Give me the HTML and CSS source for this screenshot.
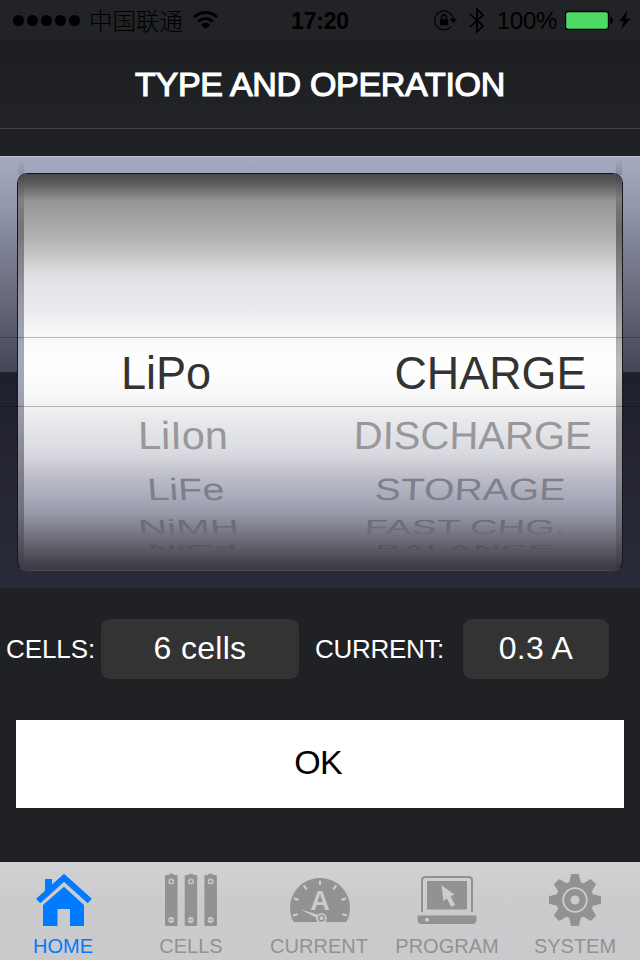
FILE: index.html
```
<!DOCTYPE html>
<html lang="en">
<head>
    <meta charset="UTF-8">
    <meta name="viewport" content="width=device-width, initial-scale=1.0">
    <title>Type and Operation</title>
    <link rel="stylesheet" href="styles.css">
</head>
<body>

    <!-- Status bar -->
    <div class="status-bar">
        <div class="status-left">
            <div class="signal"><i></i><i></i><i></i><i></i><i></i></div>
            <span class="carrier" lang="zh-CN">中国联通</span>
            <svg class="wifi" width="26" height="20" viewBox="194 10 26 20">
                <path d="M195.2 17.2a16.2 16.2 0 0 1 22.8 0M199.2 21.6a10.5 10.5 0 0 1 14.8 0" fill="none" stroke="#000" stroke-width="2.8"/>
                <path d="M206.6 29l-4.6-4.4a6.6 6.6 0 0 1 9.2 0z"/>
            </svg>
        </div>
        <span class="time">17:20</span>
        <div class="status-right">
            <svg class="lock" width="26" height="24" viewBox="431 8 26 24">
                <path d="M450.3 26.3a9.4 9.4 0 1 1 2-7.3" fill="none" stroke="#000" stroke-width="1.2"/>
                <path d="M448.6 18.8h7.6l-3.8 4.4zM439 19.2h8.2v6H439z"/>
                <path d="M440.7 19.5v-2.3a2.4 2.4 0 0 1 4.8 0v2.3" fill="none" stroke="#000" stroke-width="1.4"/>
            </svg>
            <svg class="bluetooth" width="16" height="28" viewBox="468 7 16 28">
                <path d="M469 14.2l13 11.6-6 6V9.2l6 6-13 11.6" fill="none" stroke="#000" stroke-width="1.8"/>
            </svg>
            <span class="percent">100%</span>
            <svg class="battery" width="66" height="20" viewBox="565 10 66 20">
                <rect x="565.5" y="11.5" width="43" height="18" rx="2.5" fill="#4cd964" stroke="#000" stroke-width="1.4"/>
                <path d="M610 17q3 .6 3 3.5t-3 3.5zM627.3 11l-8.3 10.3h4.5L621.3 29.5l8.9-10.8h-4.7z"/>
            </svg>
        </div>
    </div>

    <header class="nav-bar">
        <h1>TYPE AND OPERATION</h1>
    </header>

    <!-- Wheel picker -->
    <div class="picker">
        <div class="wheel">
            <div class="edge edge-left"></div>
            <div class="drum">
                <ul class="column types">
                    <li class="row1"><span>LiPo</span></li>
                    <li class="row2"><span>LiIon</span></li>
                    <li class="row3"><span>LiFe</span></li>
                    <li class="row4"><span>NiMH</span></li>
                    <li class="row5"><span>NiCd</span></li>
                </ul>
                <ul class="column operations">
                    <li class="row1"><span>CHARGE</span></li>
                    <li class="row2"><span>DISCHARGE</span></li>
                    <li class="row3"><span>STORAGE</span></li>
                    <li class="row4"><span>FAST CHG.</span></li>
                    <li class="row5"><span>BALANCE</span></li>
                </ul>
            </div>
            <div class="edge edge-right"></div>
        </div>
        <div class="selection"></div>
    </div>

    <div class="settings">
        <span class="label">CELLS:</span>
        <button class="value cells">6 cells</button>
        <span class="label current-label">CURRENT:</span>
        <button class="value current">0.3 A</button>
    </div>

    <button class="ok">OK</button>

    <!-- Tab bar -->
    <nav class="tab-bar">
        <a class="tab active">
            <svg width="64" height="60" viewBox="31 870 64 60">
                <path d="M38.2 901L64 877.8 89.8 901" fill="none" stroke="currentColor" stroke-width="6.2"/>
                <path d="M45 879h7v6l-7 6.5zM64 886.8l20 18.2v21H70v-17H57.5v17H43v-21z"/>
            </svg>
            <span>HOME</span>
        </a>
        <a class="tab">
            <svg width="64" height="60" viewBox="159 870 64 60">
                <defs>
                    <g id="cell">
                        <path d="M4 .5V-.8h4.500V.5h3q1 0 1 1v49q0 1-1 1H1q-1 0-1-1v-49q0-1 1-1z"/>
                        <circle cx="6.2" cy="7" r="2.9" fill="#ccccce"/>
                        <circle cx="6.2" cy="45.5" r="2.9" fill="#ccccce"/>
                        <path d="M4.2 7h4M6.2 5v4M4.2 45.5h4" stroke="#929292" stroke-width="1.2"/>
                    </g>
                </defs>
                <use href="#cell" x="165" y="874.5"/>
                <use href="#cell" x="184.7" y="874.5"/>
                <use href="#cell" x="204.4" y="874.5"/>
            </svg>
            <span>CELLS</span>
        </a>
        <a class="tab">
            <svg width="64" height="60" viewBox="287 870 64 60">
                <path d="M293.5 922a30 30 0 1 1 53 0z"/>
                <path d="M320 880.5v4.5M303.8 885.5l3 4M336.2 885.5l-3 4M294 898.2l4.5 1.7M346 898.2l-4.5 1.7M293 915.5l4.7-1.2M347 915.5l-4.7-1.2" stroke="#ccccce" stroke-width="2.2"/>
                <path d="M300 909.3l18.5 5.700-1.500 3z" fill="#ccccce"/>
                <path d="M317.5 922a5.300 5.300 0 1 1 8 0z" fill="#ccccce"/>
                <circle cx="321.5" cy="918.3" r="2.7" fill="#ccccce" stroke="#929292" stroke-width="1.5"/>
                <text class="gauge-letter" x="320" y="909.5">A</text>
            </svg>
            <span>CURRENT</span>
        </a>
        <a class="tab">
            <svg width="64" height="60" viewBox="415 870 64 60">
                <path d="M422 912v-31.5q0-3.5 3.5-3.5h43q3.5 0 3.5 3.5V912" fill="none" stroke="currentColor" stroke-width="2"/>
                <path d="M427 881h40v28.5h-40zM417.5 915.500h59v4q0 4.500-4.500 4.500h-50q-4.500 0-4.500-4.500z"/>
                <path d="M441.5 885.3l1.900 15.700 3.400-2.600 4.600 8.600 3.700-2-4.500-8.600 3.900-1.900z" fill="#ccccce"/>
                <circle cx="427" cy="919.7" r="2" fill="#ccccce"/>
            </svg>
            <span>PROGRAM</span>
        </a>
        <a class="tab">
            <svg width="64" height="60" viewBox="543 870 64 60">
                <defs>
                    <path id="teeth" d="M569 883l2.200-9h7.600l2.200 9v34l-2.200 9h-7.600l-2.200-9z"/>
                </defs>
                <use href="#teeth"/>
                <use href="#teeth" transform="rotate(45 575 900)"/>
                <use href="#teeth" transform="rotate(90 575 900)"/>
                <use href="#teeth" transform="rotate(135 575 900)"/>
                <circle cx="575" cy="900" r="18.8"/>
                <circle cx="575" cy="900" r="11.8" fill="none" stroke="#ccccce" stroke-width="1.8"/>
                <circle cx="575" cy="900" r="4.5" fill="#ccccce"/>
            </svg>
            <span>SYSTEM</span>
        </a>
    </nav>

</body>
</html>
```
FILE: styles.css
```
* {
    box-sizing: border-box;
}

body {
    width: 640px;
    height: 960px;
    margin: 0;
    overflow: hidden;
    display: flex;
    flex-direction: column;
    background: #202124;
    color: #fff;
    font-family: 'Liberation Sans', Arial, sans-serif;
}

button {
    border: none;
    padding: 0;
    font-family: inherit;
}

/* Status bar */
.status-bar {
    height: 40px;
    display: grid;
    grid-template-columns: 1fr auto 1fr;
    grid-template-rows: 40px;
    align-items: center;
    background: #222326;
    color: #000;
    font-size: 24px;
    line-height: 38px;
}

.status-left, .status-right {
    height: 40px;
    display: flex;
    align-items: center;
}

.status-left {
    padding-left: 13px;
}

.status-right {
    justify-content: flex-end;
    padding-right: 9px;
}

.signal {
    display: flex;
    gap: 3px;
    padding-top: 1px;
}

.signal i {
    width: 11px;
    height: 11px;
    border-radius: 50%;
    background: #000;
}

.carrier {
    margin: 0 10px 0 9px;
    font-family: 'Noto Sans CJK SC', sans-serif;
    font-weight: 300;
    font-size: 23.5px;
}

.time {
    padding-top: 2px;
    font-size: 23px;
    font-weight: bold;
    letter-spacing: -0.2px;
}

.bluetooth {
    margin: 1px 12px 0 11px;
}

.percent {
    margin-right: 8px;
    padding-top: 2px;
    font-size: 24px;
    letter-spacing: -0.3px;
}

/* Navigation bar */
.nav-bar {
    height: 89px;
    display: flex;
    justify-content: center;
    background: linear-gradient(#1d1e20, #222326);
    border-bottom: 1px solid #444547;
}

/* Stroke on the regular face gives a medium weight */
h1 {
    margin: 0;
    font-size: 34px;
    font-weight: normal;
    line-height: 88px;
    letter-spacing: -0.3px;
    -webkit-text-stroke: 1.2px #fff;
}

/* Wheel picker */
.picker {
    position: relative;
    height: 432px;
    margin-top: 27px;
    padding: 16px 17px;
    border-top: 1px solid #bfc2ce;
    background:
        linear-gradient(rgba(90, 93, 110, 0), rgba(90, 93, 110, 0.25)) 18px 0 / 6px 18px no-repeat,
        linear-gradient(rgba(90, 93, 110, 0), rgba(90, 93, 110, 0.35)) 616px 0 / 6px 18px no-repeat,
        linear-gradient(#a5abc0, #9197ad 50px, #6e7083 125px, #454759 215px, #1f1f2e 215px, #242530 300px, #292b38);
}

.wheel {
    height: 398px;
    display: grid;
    grid-template-columns: 6px 1fr 6px;
    overflow: hidden;
    border: 1px solid #16161f;
    border-bottom-color: #4a4a55;
    border-radius: 10px;
}

.edge-left {
    background: linear-gradient(#44444a, #808083 26px, #747477 56px, #9798a2 126px, #a3a9be 186px, #9fa2b5 220px, #888893 280px, #6e6d79 340px, #3b3a43);
}

.edge-right {
    background: linear-gradient(#44444a, #7a7a79 24px, #696969 56px, #888888 106px, #a9a9a9 156px, #bcbcbc 196px, #9a9a9b 250px, #8b8c94 300px, #6e6d79 350px, #36353e);
}

.drum {
    display: grid;
    grid-template-columns: 1fr 1fr;
    padding-top: 164px;
    background: linear-gradient(#48484d, #5e5e60 10px, #7d7d7d 20px, #969696 27px, #a1a1a1 42px, #b5b5b6 66px, #c9c9cc 84px, #dedee1 98px, #e5e5e9 112px, #ebebef 136px, #f4f4f6 152px, #fbfbfb 172px, #fff 194px, #f8f8f9 220px, #efeff1 236px, #e4e5e9 256px, #dadbe0 278px, #cccdd5 290px, #b9bac7 306px, #a6a8b8 326px, #9799a8 340px, #7f808d 354px, #6c6b77 366px, #504f59 382px, #3a3942);
}

.column {
    display: grid;
    grid-template-rows: 69px 56px 51px 26px 14px;
    justify-items: center;
    margin: 0;
    padding: 0;
    list-style: none;
    font-size: 46px;
    color: #333;
}

.column li {
    display: flex;
    align-items: center;
    justify-content: center;
    width: 0;
    white-space: nowrap;
    line-height: 1;
}

.types {
    padding-right: 12px;
}

.types .row2 { margin-left: 34px; }
.types .row3 { margin-left: 39px; }
.types .row4 { margin-left: 44px; }
.types .row5 { margin-left: 52px; }

.operations {
    padding-left: 44px;
}

.operations .row2 { margin-right: 34px; }
.operations .row3 { margin-right: 40px; }
.operations .row4 { margin-right: 50px; }
.operations .row5 { margin-right: 52px; }

/* Rows get flatter and fainter as they roll away */
.row2 { color: #98989b; }
.row3 { color: #7f7f8a; }
.row4 { color: #6d6c78; }
.row5 { color: #54535e; }

/* The last row has rolled under, only its upper part shows */
.row5 span { clip-path: inset(0 0 38% 0); }

.types .row1 span { transform: scaleX(0.98); }
.types .row2 span { transform: skewX(1deg) scale(0.9, 0.85); }
.types .row3 span { transform: skewX(4deg) scale(0.86, 0.67); }
.types .row4 span { transform: skewX(6deg) scale(0.88, 0.44); }
.types .row5 span { transform: translateY(1px) skewX(6deg) scale(0.87, 0.22); }

.operations .row1 span { transform: scaleX(0.975); }
.operations .row2 span { transform: skewX(-1deg) scale(0.87, 0.85); }
.operations .row3 span { transform: skewX(-3deg) scale(0.85, 0.67); }
.operations .row4 span { transform: skewX(-5deg) scale(0.83, 0.44); }
.operations .row5 span { transform: translateY(1px) skewX(-6deg) scale(0.83, 0.22); }

.selection {
    position: absolute;
    left: 0;
    right: 0;
    top: 180px;
    height: 70px;
    border-top: 1px solid rgba(0, 0, 0, 0.25);
    border-bottom: 1px solid rgba(0, 0, 0, 0.25);
}

/* Cells and current */
.settings {
    display: flex;
    align-items: center;
    height: 60px;
    margin-top: 31px;
    padding-left: 6px;
}

.label {
    width: 95px;
    font-size: 26px;
    letter-spacing: -0.1px;
}

.current-label {
    width: 148px;
    margin-left: 16px;
    letter-spacing: -0.3px;
}

.value {
    height: 60px;
    padding-bottom: 2px;
    border-radius: 9px;
    background: #333;
    color: #fff;
    font-size: 32px;
}

.cells {
    width: 198px;
    letter-spacing: 0.3px;
}

.current {
    width: 146px;
    letter-spacing: 0.3px;
}

.ok {
    height: 88px;
    margin: 41px 16px 0;
    padding: 0 4px 3px 0;
    background: #fff;
    color: #000;
    font-size: 34px;
    letter-spacing: -0.8px;
}

/* Tab bar */
.tab-bar {
    display: grid;
    grid-template-columns: repeat(5, 128px);
    height: 98px;
    margin-top: auto;
    background: linear-gradient(#d2d2d4, #cbcbcd 40px, #cacacc);
}

.tab {
    display: flex;
    flex-direction: column;
    align-items: center;
    margin-left: -2px;
    padding-top: 8px;
    color: #929292;
    font-size: 20px;
    line-height: 22px;
}

.tab svg {
    fill: currentColor;
    margin-bottom: 5px;
}

.active {
    color: #007aff;
}

.gauge-letter {
    fill: #ccccce;
    font-size: 27px;
    font-weight: bold;
    text-anchor: middle;
}
```
